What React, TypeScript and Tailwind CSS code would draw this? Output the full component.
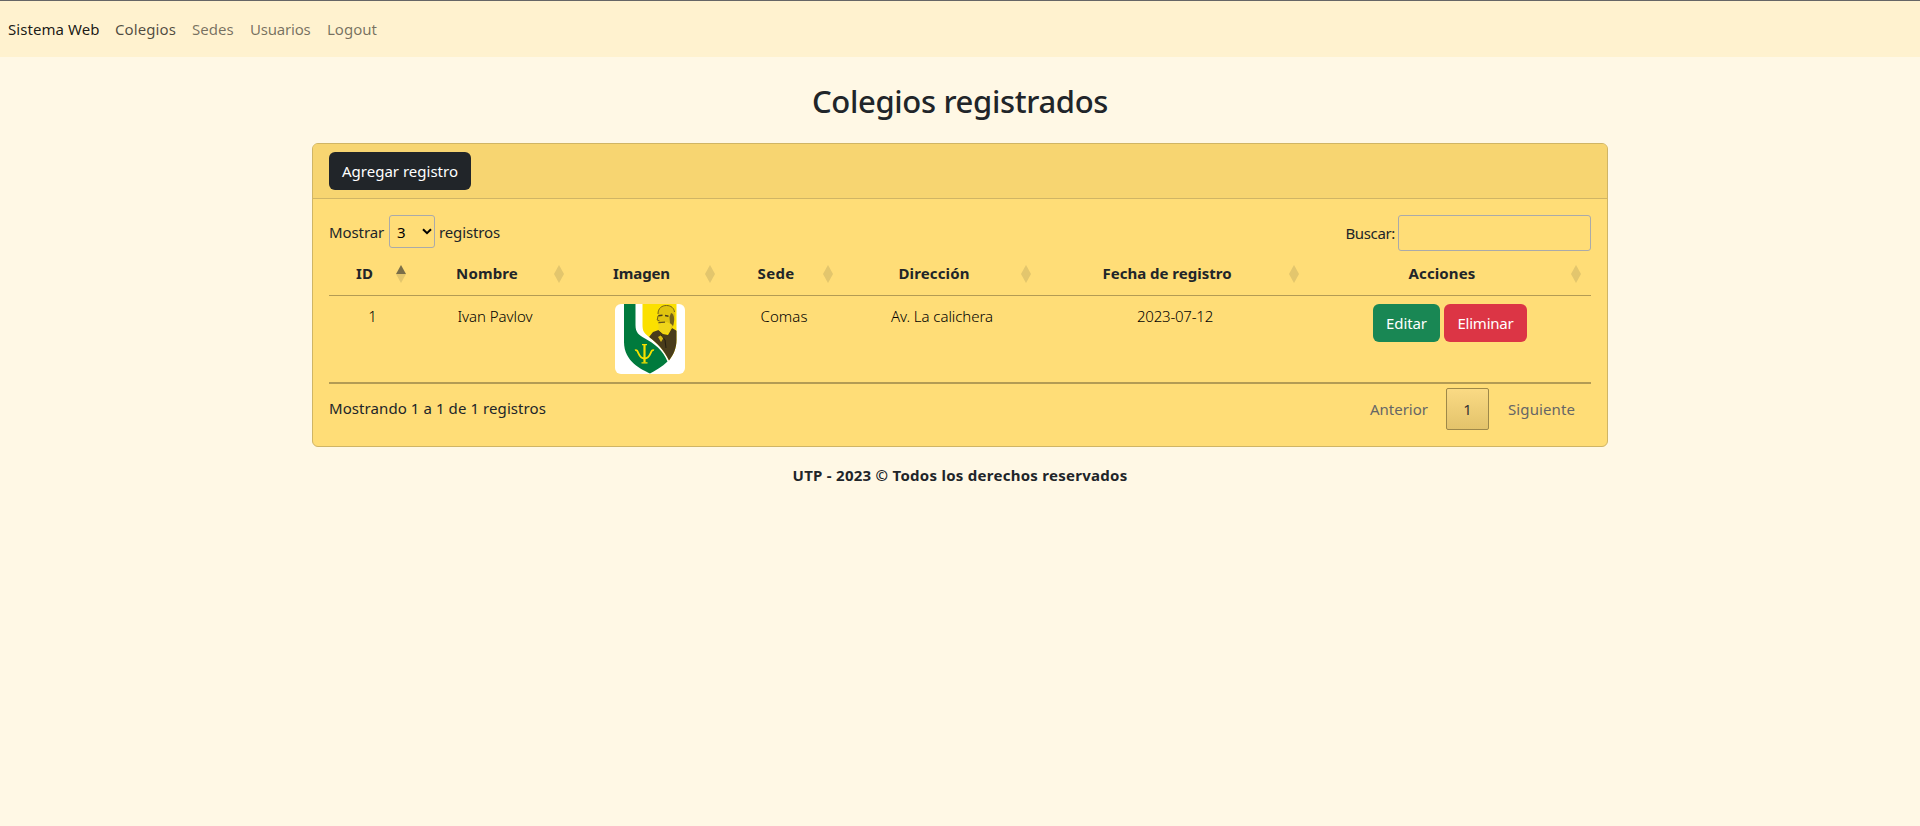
import { clsx } from 'clsx';

type Column = { label: string; width: string; tracking: string; active?: boolean };

const columns: Column[] = [
  { label: 'ID', width: 'w-[87px]', tracking: 'tracking-[0.08px]', active: true },
  { label: 'Nombre', width: 'w-[158px]', tracking: 'tracking-[0.15px]' },
  { label: 'Imagen', width: 'w-[151px]', tracking: 'tracking-[-0.1px]' },
  { label: 'Sede', width: 'w-[118px]', tracking: 'tracking-[0.3px]' },
  { label: 'Dirección', width: 'w-[198px]', tracking: 'tracking-[0.12px]' },
  { label: 'Fecha de registro', width: 'w-[268px]', tracking: 'tracking-normal' },
  { label: 'Acciones', width: 'w-[282px]', tracking: 'tracking-[0.13px]' },
];

function SortIcon({ active }: { active?: boolean }) {
  return (
    <svg className="absolute top-[14px] right-[10.5px] h-[18px] w-[10px]" viewBox="0 0 10 18">
      <path d="M5 0 L10 9 H0 Z" fill="#212529" fillOpacity={active ? 0.6 : 0.125} />
      <path d="M0 9 H10 L5 18 Z" fill="#212529" fillOpacity={0.125} />
    </svg>
  );
}

function SchoolCrest() {
  return (
    <svg className="mx-auto block h-[70px] w-[70px] rounded-md bg-white" viewBox="0 0 70 70">
      <defs>
        <clipPath id="yellow-half">
          <path d="M27.5 0 H61.5 V36 C61.5 44 58.5 51 54 56.5 C49 46 42 39 34 33 C29 29 27.5 27 27.5 21 Z" />
        </clipPath>
      </defs>
      <path
        d="M9 0 H20.5 V21 C20.5 29 24 31 30 34.5 C39 39.5 48 46 52.5 57.5 C47 63 41 66 35 69.5 C27 65.5 9 58 9 38 Z"
        fill="#007A3D"
      />
      <g clipPath="url(#yellow-half)">
        <rect x="27" width="36" height="60" fill="#FBE000" />
        <path d="M34 33 L38 28 L43.500 26 L48 30 L53 31 L57 24 L62 27 V58 H52 Z" fill="#493C1B" />
        <path d="M43 10 C43 4 47 1.500 51.500 1.500 C57 1.500 60.500 6 60 12 L58.500 22 L53 29 L46 27 L42.800 18 L42 15.500 Z" fill="#E0C410" />
        <path d="M43 10 C43 4 47 1.500 51.500 1.500 C56 1.500 59 4 59.500 8" fill="none" stroke="#75631A" strokeWidth="1" />
        <path d="M56 9 C59.500 10 60 16 58 22 L55 19 L54.500 13 Z" fill="#75631A" />
        <path d="M43.300 11.800 L47.500 11.300 M50 11.600 L53.500 12.200" stroke="#493C1B" strokeWidth="1.500" />
        <path d="M43 12 L42.200 16 L44.500 16.800" fill="none" stroke="#75631A" strokeWidth="1" />
        <path d="M43.500 19.500 L52 18 L57 21 L54 28.500 L48.500 30 L43.500 26 Z" fill="#F0D51A" />
        <path d="M43.500 18.600 L50 18.200" stroke="#66551A" strokeWidth="1.200" />
        <path d="M43 33 L46.500 31 L48.500 34 L46 38 Z" fill="#D8BC16" />
        <path d="M46 31 L50 36 L51 44" fill="none" stroke="#241E11" strokeWidth="1" />
      </g>
      <g fill="none" stroke="#F5E100">
        <path d="M29.500 41 V58.500" strokeWidth="2.200" />
        <path d="M27 40.600 H32 M26.500 58.800 H32.500" strokeWidth="1.300" />
        <path d="M20 46.300 C24 44.500 22.500 54.500 29.500 54.500 C36.500 54.500 35 44.500 39 46.300" strokeWidth="1.800" />
      </g>
    </svg>
  );
}

export default function App() {
  return (
    <div className="flex min-h-screen flex-col bg-[#FFF8E5] font-['Noto_Sans','Open_Sans',sans-serif] text-[15px] leading-6 text-[#212529]">
      <nav className="flex h-[57px] items-center border-t border-[#666] bg-[#FFF2CF] pl-2">
        <a className="w-[107px] tracking-[0.06px] text-black/90">Sistema Web</a>
        <a className="w-[77px] tracking-[0.09px] text-black/70">Colegios</a>
        <a className="w-[58px] text-black/55">Sedes</a>
        <a className="w-[77px] tracking-[-0.2px] text-black/55">Usuarios</a>
        <a className="text-black/55">Logout</a>
      </nav>

      <h2 className="mt-[25px] text-center text-[31px] leading-[38px] font-medium tracking-[-0.33px]">Colegios registrados</h2>

      <main className="mx-auto mt-[23px] w-[1296px] rounded-md border border-[#D0B565] bg-[#FFDD77]">
        <header className="flex h-[55px] items-center rounded-t-[5px] border-b border-[#D0B565] bg-[#F7D571] px-4">
          <button className="h-[38px] w-[142px] rounded-md bg-[#212529] text-center whitespace-nowrap text-white">Agregar registro</button>
        </header>

        <div className="px-4 pt-4">
          <div className="flex h-9 items-start justify-between">
            <div className="flex h-[33px] items-center">
              <span className="w-[60px] tracking-[-0.1px]">Mostrar</span>
              <div className="flex h-[33px] w-[46px] items-center justify-between rounded-[3px] border border-[#aaa] pr-[2px] pl-[7px] text-black">
                <span>3</span>
                <svg className="h-[7px] w-[10px]" viewBox="0 0 10 7">
                  <path d="M1 1.200 L5 5.200 L9 1.200" fill="none" stroke="#000" strokeWidth="2" />
                </svg>
              </div>
              <span className="ml-1 tracking-[-0.13px]">registros</span>
            </div>
            <label className="flex h-9 items-center">
              <span className="mr-[3px] tracking-[-0.35px]">Buscar:</span>
              <input className="h-9 w-[193px] rounded-[3px] border border-[#aaa] bg-transparent" />
            </label>
          </div>

          <table className="w-[1262px] table-fixed border-separate border-spacing-0 text-center">
            <thead>
              <tr>
                {columns.map((c) => (
                  <th key={c.label} className={clsx('relative h-[45px] border-b border-[#B39B54] py-0 pr-[26px] pl-[10px] font-bold whitespace-nowrap', c.width, c.tracking)}>
                    {c.label}
                    <SortIcon active={c.active} />
                  </th>
                ))}
              </tr>
            </thead>
            <tbody>
              <tr className="align-top font-light text-black [&>td]:h-[88px] [&>td]:border-b-2 [&>td]:border-[#B39B54] [&>td]:p-0 [&>td]:pt-2">
                <td>1</td>
                <td className="tracking-[-0.05px]">Ivan Pavlov</td>
                <td>
                  <SchoolCrest />
                </td>
                <td className="tracking-[0.06px]">Comas</td>
                <td className="tracking-[-0.06px]">Av. La calichera</td>
                <td className="tracking-[-0.22px]">2023-07-12</td>
                <td>
                  <div className="flex justify-center gap-1 font-normal text-white">
                    <button className="h-[38px] w-[67px] rounded-md bg-[#198754] tracking-[-0.08px]">Editar</button>
                    <button className="h-[38px] w-[83px] rounded-md bg-[#DC3545] tracking-[-0.23px]">Eliminar</button>
                  </div>
                </td>
              </tr>
            </tbody>
          </table>

          <div className="flex h-[62px] items-start justify-between">
            <span className="pt-3 tracking-[0.08px]">Mostrando 1 a 1 de 1 registros</span>
            <div className="flex items-center pt-1 text-[#666]">
              <span>Anterior</span>
              <span className="mr-[19px] ml-[18px] flex h-[42px] w-[43px] items-center justify-center rounded-xs border border-[#9E8849] bg-linear-to-b from-[#FADA84] to-[#E3C36B] text-[#333]">1</span>
              <span className="mr-4 tracking-[0.1px]">Siguiente</span>
            </div>
          </div>
        </div>
      </main>

      <footer className="mt-4 text-center font-bold tracking-[0.27px]">UTP - 2023 © Todos los derechos reservados</footer>
    </div>
  );
}
